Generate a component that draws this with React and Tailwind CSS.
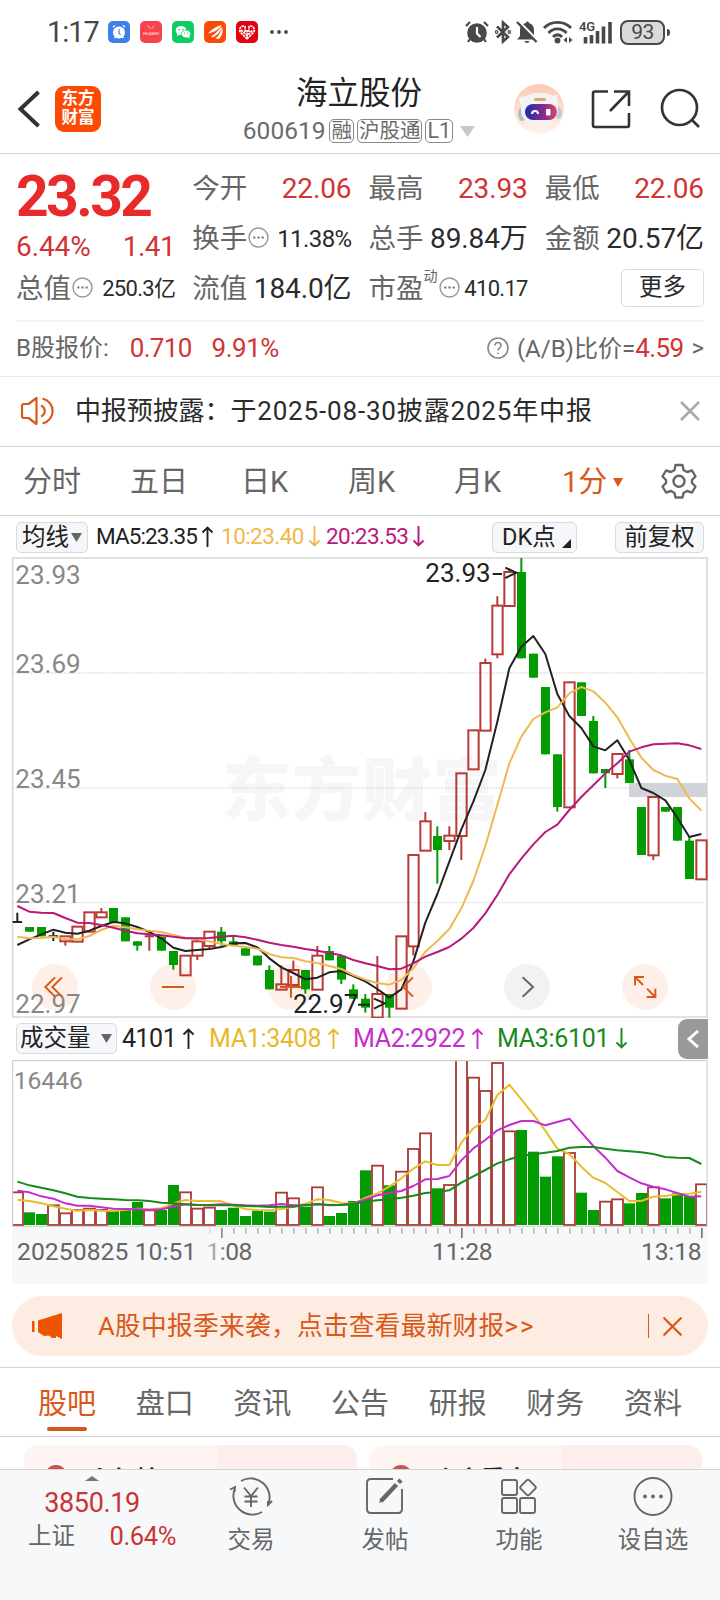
import React from 'react';
import { FiX } from 'react-icons/fi';

// chart geometry is kept in thirds of a pixel
const STEP = 36;
const cx = (i) => 52 + STEP * i;
const toPoints = (values) => values.map((y, i) => `${cx(i)},${y}`).join(' ');

// [type, body top, body bottom, high, low]
const candles = [
  ['k', 1116, 1116, 1088, 1118], ['g', 1131, 1145], ['g', 1131, 1159], ['k', 1159, 1159, 1145, 1173],
  ['r', 1159, 1174, 1159, 1187], ['r', 1130, 1175], ['r', 1087, 1145], ['r', 1087, 1102, 1074, 1102],
  ['g', 1074, 1116], ['g', 1102, 1174], ['g', 1174, 1187, 1174, 1202], ['t', 1159, 1159, 1152, 1202],
  ['g', 1160, 1202], ['g', 1203, 1245, 1203, 1259], ['r', 1217, 1276], ['r', 1174, 1217, 1165, 1230],
  ['r', 1145, 1188, 1145, 1200], ['g', 1145, 1174, 1131, 1187], ['g', 1174, 1185, 1158, 1185], ['g', 1195, 1217],
  ['g', 1217, 1246], ['g', 1260, 1318, 1246, 1318], ['r', 1303, 1319, 1246, 1319], ['r', 1260, 1305, 1232, 1305],
  ['g', 1260, 1318, 1260, 1331], ['r', 1217, 1319, 1188, 1319], ['g', 1203, 1231, 1188, 1231], ['g', 1217, 1289, 1217, 1302],
  ['g', 1318, 1346, 1303, 1346], ['g', 1346, 1373, 1332, 1388], ['r', 1332, 1403, 1218, 1403], ['g', 1332, 1373, 1332, 1403],
  ['r', 1159, 1376], ['r', 915, 1189, 915, 1216], ['r', 814, 902, 786, 902], ['g', 858, 900, 829, 1001],
  ['r', 857, 873, 829, 900], ['r', 670, 858, 670, 930], ['r', 541, 658], ['r', 339, 542, 326, 542],
  ['r', 167, 313, 139, 325], ['r', 66, 168, 56, 168], ['g', 66, 325, 24, 325], ['g', 311, 383],
  ['g', 411, 613], ['g', 613, 771, 613, 785], ['r', 397, 772], ['g', 397, 498],
  ['g', 513, 670, 498, 670], ['g', 657, 670, 657, 714], ['r', 612, 672, 612, 685], ['g', 628, 699, 600, 699],
  ['g', 771, 915], ['r', 741, 916, 741, 930], ['g', 771, 785], ['g', 771, 872],
  ['g', 872, 987, 860, 987], ['r', 871, 988],
];

const ma5 = [1185, 1168, 1153, 1139, 1148, 1151, 1142, 1128, 1116, 1120, 1131, 1146, 1165, 1193, 1203, 1200, 1197, 1191, 1180, 1179, 1192, 1225, 1252, 1269, 1288, 1283, 1267, 1263, 1278, 1294, 1317, 1343, 1318, 1235, 1118, 1032, 935, 838, 755, 660, 515, 355, 290, 258, 312, 432, 498, 534, 589, 601, 571, 630, 714, 729, 751, 803, 861, 852];
const ma10 = [1160, 1165, 1164, 1160, 1167, 1168, 1158, 1140, 1127, 1132, 1138, 1142, 1146, 1155, 1163, 1168, 1174, 1182, 1187, 1191, 1196, 1212, 1222, 1224, 1234, 1239, 1248, 1257, 1275, 1289, 1299, 1304, 1290, 1255, 1205, 1173, 1137, 1075, 993, 888, 765, 640, 560, 507, 487, 472, 430, 411, 424, 458, 502, 565, 623, 660, 677, 687, 745, 782];
const ma20 = [1068, 1085, 1088, 1089, 1104, 1118, 1119, 1125, 1133, 1142, 1150, 1153, 1156, 1160, 1165, 1165, 1164, 1160, 1157, 1162, 1169, 1178, 1185, 1190, 1197, 1202, 1209, 1216, 1230, 1240, 1248, 1258, 1256, 1240, 1220, 1206, 1191, 1166, 1134, 1090, 1035, 973, 926, 883, 846, 824, 780, 741, 706, 670, 640, 605, 592, 583, 581, 580, 586, 597];

const volumes = [517, 577, 582, 556, 580, 570, 566, 570, 572, 570, 546, 571, 570, 495, 517, 566, 563, 570, 563, 588, 572, 575, 518, 535, 560, 502, 588, 579, 543, 451, 437, 496, 455, 387, 340, 505, 495, 60, 173, 213, 129, 334, 330, 395, 470, 409, 399, 518, 570, 545, 538, 550, 519, 502, 535, 520, 528, 493];
const volumeTypes = 'rggrrrrrgggrggrrrgggggrrgrggggrgrrrgrrrrrrggggrggrrggrgggr';
const vol1 = [539, 543, 550, 559, 566, 572, 570, 572, 573, 569, 566, 568, 565, 550, 540, 543, 543, 544, 556, 567, 570, 571, 567, 560, 551, 538, 540, 549, 551, 534, 520, 500, 475, 446, 424, 435, 435, 368, 325, 300, 225, 194, 238, 283, 332, 386, 402, 440, 473, 489, 516, 543, 543, 530, 528, 523, 521, 515];
const vol2 = [512, 517, 529, 536, 550, 557, 557, 562, 566, 567, 568, 570, 568, 560, 553, 555, 555, 553, 554, 556, 557, 556, 552, 556, 556, 553, 556, 555, 551, 538, 526, 519, 513, 498, 478, 477, 468, 421, 385, 360, 331, 315, 303, 303, 316, 306, 296, 337, 378, 413, 453, 472, 490, 500, 508, 519, 530, 529];
const vol3 = [485, 496, 503, 511, 520, 530, 534, 536, 538, 540, 541, 543, 548, 550, 553, 555, 556, 556, 556, 558, 559, 561, 560, 560, 555, 552, 555, 555, 552, 545, 541, 538, 533, 527, 519, 516, 511, 488, 469, 450, 430, 418, 408, 403, 398, 393, 383, 381, 381, 386, 391, 394, 397, 402, 411, 413, 414, 432];

const Candle = ({ data, i }) => {
  const [type, top, bottom, high = top, low = bottom] = data;
  const x = cx(i);
  if (type === 'k' || type === 't') {
    return <path d={`M${x} ${high}V${low}M${x - 14} ${top}H${x + 14}`} stroke={type === 'k' ? '#222' : '#b83a36'} strokeWidth="6" />;
  }
  if (type === 'g') {
    return (
      <g fill="#029c02">
        <rect x={x - 13} y={top} width="27" height={bottom - top} />
        <rect x={x - 3} y={high} width="6" height={low - high} />
      </g>
    );
  }
  return (
    <g stroke="#b83a36" strokeWidth="6" fill="none">
      <rect x={x - 15} y={top} width="31" height={bottom - top} />
      <path d={`M${x} ${high}V${top}M${x} ${bottom}V${low}`} />
    </g>
  );
};

const PriceChart = () => (
  <svg className="block w-full h-[461px]" viewBox="0 21 2160 1383" preserveAspectRatio="none">
    <text x="666" y="796" fontSize="208" fontWeight="900" textLength="838" fill="#f6f6f6">东方财富</text>
    <g stroke="#dedede" strokeWidth="4" strokeDasharray="5 4">
      <path d="M38 369H2121M38 714H2121M38 1058H2121" />
    </g>
    <rect x="38" y="24" width="2083" height="1377" fill="none" stroke="#dcdcdc" strokeWidth="5" />
    {[165, 519, 873, 1227, 1581, 1935].map((x) => (
      <circle key={x} cx={x} cy="1311" r="69" fill={x === 1581 ? '#f2f2f2' : '#fef0e8'} />
    ))}
    <g fontSize="78" fill="#888">
      <text x="46" y="101">23.93</text>
      <text x="46" y="369">23.69</text>
      <text x="46" y="714">23.45</text>
      <text x="46" y="1058">23.21</text>
      <text x="46" y="1390">22.97</text>
    </g>
    <rect x="1887" y="699" width="234" height="42" fill="#d0d4da" />
    {candles.map((c, i) => <Candle key={i} data={c} i={i} />)}
    <g fill="none" strokeWidth="6" strokeLinejoin="round">
      <polyline points={toPoints(ma5)} stroke="#222" />
      <polyline points={toPoints(ma10)} stroke="#efb850" />
      <polyline points={toPoints(ma20)} stroke="#b8197b" />
    </g>
    <g fontSize="78" fill="#222">
      <text x="1276" y="96">23.93</text>
      <text x="879" y="1388">22.97</text>
    </g>
    <path d="M1478 72H1506M1516 53L1549 68L1516 84M1074 1364H1110M1122 1346L1154 1360L1122 1376" fill="none" stroke="#222" strokeWidth="6" />
    {/* zoom and pan controls */}
    <g fill="none" stroke="#d9591a" strokeWidth="6">
      <path d="M165 1282L136 1311L165 1340M186 1282L157 1311L186 1340" />
      <path d="M486 1311H552M840 1311H906M873 1278V1343" />
      <path d="M1239 1282L1210 1311L1239 1340" />
      <path d="M1905 1306V1281H1932M1905 1281L1929 1305M1940 1341H1966V1316M1966 1341L1941 1316" />
      <path d="M1568 1282L1599 1311L1568 1340" stroke="#666" />
    </g>
  </svg>
);

const VolumeChart = () => (
  <svg className="block w-full h-[225px]" viewBox="0 117 2160 675" preserveAspectRatio="none">
    <defs>
      <clipPath id="volume-area"><rect x="38" y="122" width="2083" height="497" /></clipPath>
      <linearGradient id="label-fade" x1="0" x2="1">
        <stop offset="0" stopColor="#f7f8fa" />
        <stop offset="1" stopColor="#f7f8fa" stopOpacity="0" />
      </linearGradient>
    </defs>
    <rect x="36" y="620" width="2087" height="172" fill="#f7f8fa" />
    <text x="41" y="207" fontSize="74" fill="#888">16446</text>
    <g clipPath="url(#volume-area)">
      {volumes.map((y, i) => (
        volumeTypes[i] === 'g'
          ? <rect key={i} x={cx(i) - 16} y={y} width="33" height={615 - y} fill="#029c02" />
          : <rect key={i} x={cx(i) - 16} y={y} width="33" height={615 - y} fill="none" stroke="#ab3c3a" strokeWidth="5.5" />
      ))}
    </g>
    <rect x="38" y="122" width="2083" height="497" fill="none" stroke="#c8c8c8" strokeWidth="3" />
    <g fill="none" strokeWidth="6" strokeLinejoin="round">
      <polyline points={toPoints(vol1)} stroke="#e8bd2c" />
      <polyline points={toPoints(vol2)} stroke="#c42ecb" />
      <polyline points={toPoints(vol3)} stroke="#178a1b" />
    </g>
    {Array.from({ length: 42 }, (_, k) => {
      const major = [1, 21, 41].includes(k);
      return <rect key={k} x={627 + STEP * k} y="624" width="5" height={major ? 30 : 18} fill={major ? '#777' : '#bbb'} />;
    })}
    <g fontSize="74" fill="#666">
      <text x="51" y="719" textLength="538">20250825 10:51</text>
      <text x="619" y="719" textLength="138">1:08</text>
      <text x="1296" y="719" textLength="182">11:28</text>
      <text x="1923" y="719" textLength="182">13:18</text>
    </g>
    <rect x="596" y="622" width="84" height="110" fill="url(#label-fade)" />
  </svg>
);

const StatusBar = () => (
  <div className="h-16 flex items-center pl-12 pr-[50px] text-[#484848]">
    <span className="w-[60px] mt-px -ml-px mr-px text-[29px] tracking-[-1px]">1:17</span>
    <div className="flex gap-2.5">
      <svg width="22" height="22" viewBox="0 0 22 22">
        <rect width="22" height="22" rx="5" fill="#3f7fe6" />
        <circle cx="11" cy="11.5" r="6" fill="#fff" />
        <path d="M5 6L7 4.500M17 6L15 4.500M6.500 17L8 15.500M15.500 17L14 15.500" stroke="#fff" strokeWidth="1.500" />
        <path d="M11 8V12L12.500 14" stroke="#3f7fe6" strokeWidth="1.200" fill="none" />
      </svg>
      <svg width="22" height="22" viewBox="0 0 22 22">
        <rect width="22" height="22" rx="5" fill="#f8434d" />
        <path d="M8 4.500C9 8 13 8 14 4.500" stroke="#fff" strokeWidth="0.800" strokeDasharray="1.500 1" fill="none" />
        <text x="3" y="14" fontSize="4" textLength="16" fill="#fff">HUAWEI</text>
      </svg>
      <svg width="22" height="22" viewBox="0 0 22 22">
        <rect width="22" height="22" rx="5" fill="#0bce63" />
        <ellipse cx="9" cy="9.500" rx="5.300" ry="4.600" fill="#fff" />
        <path d="M5.500 12L5 15L8 13.500Z" fill="#fff" />
        <ellipse cx="14" cy="13" rx="4.600" ry="3.900" fill="#fff" stroke="#0bce63" strokeWidth="0.700" />
        <path d="M15 16L17.500 17.500L17 14.500Z" fill="#fff" />
        <g fill="#0bce63"><circle cx="7.200" cy="8.500" r="0.800" /><circle cx="10.800" cy="8.500" r="0.800" /><circle cx="12.500" cy="12" r="0.600" /><circle cx="15.500" cy="12" r="0.600" /></g>
      </svg>
      <svg width="22" height="22" viewBox="0 0 22 22">
        <rect width="22" height="22" rx="5" fill="#fb4a05" />
        <path d="M4 12.500C8 8 12 5.500 17.500 4C15.500 8 10 11.500 4 12.500ZM7 15.500C11.500 12.500 15 9 17.500 5C17.500 10 13 14.500 8.500 16.500ZM11.500 17.500C15.500 14 17 10 18 6C19.500 11 18 15 15 18Z" fill="#fff" />
      </svg>
      <svg width="22" height="22" viewBox="0 0 22 22">
        <rect width="22" height="22" rx="5" fill="#e0000f" />
        <path d="M11 18L4.500 11.500C2 8 5.500 3.500 9 5.500V11M11 18L17.500 11.500C20 8 16.500 3.500 13 5.500V11M11 18V9M5 9L11 14.500L17 9" fill="none" stroke="#fff" strokeWidth="1.700" strokeDasharray="2.500 0.700" />
      </svg>
    </div>
    <svg className="ml-3" width="18" height="6" viewBox="0 0 18 6" fill="currentColor">
      <circle cx="2" cy="3" r="1.900" /><circle cx="9" cy="3" r="1.900" /><circle cx="16" cy="3" r="1.900" />
    </svg>
    <div className="ml-auto flex items-center">
      <svg width="26" height="24" viewBox="0 0 26 24">
        <circle cx="13" cy="13" r="9.800" fill="currentColor" />
        <path d="M2 6L6 2M24 6L20 2M6 19L4 22M20 19L22 22" stroke="currentColor" strokeWidth="2.200" />
        <path d="M13 7V13.500L16.500 17" stroke="#fff" strokeWidth="2.200" fill="none" />
      </svg>
      <svg className="ml-[5px]" width="16" height="24" viewBox="0 0 16 24" fill="none" stroke="currentColor" strokeWidth="2.600">
        <path d="M2 6.500L13 17L8 21.500V2.500L13 7L2 17.500" />
        <circle cx="1.500" cy="12" r="0.600" /><circle cx="14.300" cy="12" r="0.600" />
      </svg>
      <svg className="ml-[5px]" width="22" height="24" viewBox="0 0 22 24" fill="currentColor">
        <path d="M1 19.500L4 16V10C4 6 7 3.500 10 3C10 1 13 1 13 3C16 4 18 6.500 18 10V16L21 19.500ZM8.500 21H13.500C13 23.500 9 23.500 8.500 21Z" />
        <path d="M2 0.500L22 21" stroke="#fff" strokeWidth="2.500" />
        <path d="M1 2L20.500 22" stroke="currentColor" strokeWidth="2.400" />
      </svg>
      <svg className="ml-1" width="32" height="24" viewBox="0 0 32 24" fill="none" stroke="currentColor" strokeWidth="2.900">
        <path d="M2 8C9 0.500 22 0.500 29 8M6.500 13C11.500 7.500 19.500 7.500 24.500 13M11 17C13.500 14 17.500 14 20 17" />
        <circle cx="15.500" cy="20.500" r="2.900" fill="currentColor" stroke="none" />
        <path d="M25 17V23L21.500 20ZM27 17V23L30.500 20Z" fill="currentColor" stroke="none" />
      </svg>
      <svg className="ml-[5px]" width="34" height="24" viewBox="0 0 34 24">
        <text x="0" y="10.500" fontSize="13" fontWeight="600" textLength="16" fill="currentColor">4G</text>
        <path d="M6.500 17V23.500M12.500 15V23.500M18.500 11V23.500M24.500 6.500V23.500M31 2V23.500" stroke="currentColor" strokeWidth="3.600" strokeLinecap="butt" />
      </svg>
      <div className="ml-[7px] w-[45px] h-[25px] rounded-[8px] border-2 border-[#484848] bg-[#dadada] flex items-center justify-center text-[21px] leading-none tracking-[-0.5px]">93</div>
      <div className="ml-0.5 w-[3px] h-[7px] rounded-r bg-[#484848]" />
    </div>
  </div>
);

const Header = () => (
  <div className="h-[90px] border-b border-[#d4d4d4] flex pl-[17px] pr-[19px]">
    <div className="w-[200px] flex items-center">
      <svg width="24" height="38" viewBox="0 0 24 38" fill="none" stroke="#333" strokeWidth="4"><path d="M21.500 2L3.500 19L21.500 36" /></svg>
      <div className="ml-[14px] w-[46px] h-[46px] rounded-[9px] bg-[#fd4a04] text-white text-[16.500px] leading-[19px] font-bold text-center pt-[3px]">东方<br />财富</div>
    </div>
    <div className="flex-1 flex flex-col items-center">
      <div className="text-[31.500px] leading-[36px] mt-[12px] text-[#222]">海立股份</div>
      <div className="flex items-center gap-[3px] text-[20.500px] text-[#6b6b6b] mt-[6px] h-[26px]">
        <span className="text-[24.500px] mr-px">600619</span>
        <span className="h-6 px-px rounded-[5px] border border-[#888] leading-[22px]">融</span>
        <span className="h-6 px-px rounded-[5px] border border-[#888] leading-[22px]">沪股通</span>
        <span className="h-6 px-px rounded-[5px] border border-[#888] leading-[22px] text-[21.500px]">L1</span>
        <svg className="ml-1" width="15" height="11"><path d="M0 0H15L7.500 11Z" fill="#c8c8c8" /></svg>
      </div>
    </div>
    <div className="w-[200px] flex items-center justify-end">
      <svg width="50" height="50" viewBox="0 0 50 50">
        <defs>
          <linearGradient id="robot-bg" x2="0" y2="1"><stop stopColor="#fdc9b0" /><stop offset="1" stopColor="#fff3ee" /></linearGradient>
          <linearGradient id="robot-face" x2="1"><stop stopColor="#1d2fa6" /><stop offset=".6" stopColor="#8a2a90" /><stop offset="1" stopColor="#d34a72" /></linearGradient>
        </defs>
        <circle cx="25" cy="25" r="25" fill="url(#robot-bg)" />
        <ellipse cx="8" cy="30" rx="4" ry="7" fill="#b9bac6" /><ellipse cx="44" cy="29" rx="4" ry="6" fill="#c9c9d2" />
        <path d="M5 13L13 12L10 23L6 20ZM36 12L43 11L44 20L40 22Z" fill="#f7f3f4" />
        <rect x="7" y="9" width="37" height="32" rx="15" fill="#f4f2f5" />
        <rect x="20" y="14" width="12" height="3" rx="1.500" fill="#d9a878" />
        <rect x="11" y="20" width="32" height="16" rx="8" fill="url(#robot-face)" />
        <path d="M18 30C18 26 24 26 24 30" stroke="#fff" strokeWidth="2" fill="none" />
        <rect x="32" y="25" width="4.500" height="6.500" rx="1" fill="#fff" />
      </svg>
      <svg className="ml-[27px]" width="40" height="40" viewBox="0 0 40 40" fill="none" stroke="#333" strokeWidth="2.600">
        <path d="M17 2.500H4Q2 2.500 2 4.500V36Q2 38 4 38H36Q38 38 38 36V24M23 2.500H38V17M37 3.500L19 22" />
      </svg>
      <svg className="ml-[29px]" width="41" height="41" viewBox="0 0 41 41" fill="none" stroke="#333" strokeWidth="2.700">
        <circle cx="19.500" cy="19.500" r="17.500" /><path d="M31.500 31.500L39 39" />
      </svg>
    </div>
  </div>
);

const Dots = () => (
  <svg className="self-center shrink-0 ml-px -mt-0.5" width="21" height="21" viewBox="0 0 20 20">
    <circle cx="10" cy="10" r="9" fill="none" stroke="#999" strokeWidth="1.400" />
    <g fill="#888"><circle cx="6" cy="10" r="1.200" /><circle cx="10" cy="10" r="1.200" /><circle cx="14" cy="10" r="1.200" /></g>
  </svg>
);

const Stat = ({ label, value, red, dots, sup, small, smaller }) => {
  let size = 'text-[28px] tracking-[-0.100px]';
  if (small) size = 'text-[24px] tracking-[-0.600px]';
  if (smaller) size = 'text-[22px] tracking-[-0.700px]';
  return (
    <div className="h-[50px] pt-px flex items-center whitespace-nowrap">
      <span className="text-[27.500px] text-[#666]">{label}</span>
      {sup && <span className="text-[14px] text-[#666] mb-6">{sup}</span>}
      {dots && <Dots />}
      <span className={`ml-auto ${size} ${red ? 'text-[#d03434]' : 'text-[#2b2b2b]'}`}>{value}</span>
    </div>
  );
};

const Quote = () => (
  <div className="h-[168px] mx-4 pt-[9px] border-b-2 border-[#f3f3f3] grid grid-cols-4 grid-rows-[50px_50px_50px] gap-x-[17px]">
    <div className="row-span-2 whitespace-nowrap pt-px">
      <div className="h-[65px] flex items-center text-[57px] font-bold tracking-[-2.600px] text-[#e82a2a]">23.32</div>
      <div className="h-[35px] flex items-center justify-between text-[28px] tracking-[-0.100px] text-[#d03434]">
        <span>6.44%</span><span className="tracking-[-0.500px]">1.41</span>
      </div>
    </div>
    <Stat label="今开" value="22.06" red />
    <Stat label="最高" value="23.93" red />
    <Stat label="最低" value="22.06" red />
    <Stat label="换手" value="11.38%" dots small />
    <Stat label="总手" value="89.84万" />
    <Stat label="金额" value="20.57亿" />
    <Stat label="总值" value="250.3亿" dots smaller />
    <Stat label="流值" value="184.0亿" />
    <Stat label="市盈" sup="动" value="410.17" dots smaller />
    <div className="flex items-center justify-end">
      <button className="w-[83px] h-[38px] rounded-[5px] border border-[#ddd] text-[23.500px] leading-none text-[#2b2b2b]">更多</button>
    </div>
  </div>
);

const BShare = () => (
  <div className="h-[55px] px-4 pb-[2px] border-b border-[#ececec] flex items-center text-[24px] text-[#666] whitespace-nowrap">
    <span>B股报价:</span>
    <span className="ml-[21px] text-[26px] tracking-[-0.700px] text-[#d03434]">0.710</span>
    <span className="ml-5 text-[26px] tracking-[-0.500px] text-[#d03434]">9.91%</span>
    <svg className="ml-auto mr-2" width="22" height="22" viewBox="0 0 22 22" fill="none" stroke="#888" strokeWidth="1.600">
      <circle cx="11" cy="11" r="10" /><path d="M8 8.500C8 4.500 14 4.500 14 8.500C14 11 11 11 11 13.500M11 15.500V17" />
    </svg>
    <span>(A/B)比价=<span className="text-[26px] tracking-[-0.600px] text-[#d03434]">4.59</span></span>
    <span className="ml-2">&gt;</span>
  </div>
);

const Notice = () => (
  <div className="h-[70px] px-[20px] border-b border-[#d4d4d4] flex items-center pb-px text-[26px] text-[#2b2b2b] whitespace-nowrap">
    <svg width="36" height="30" viewBox="0 0 36 30" fill="none" stroke="#d9591a" strokeWidth="2.200">
      <path d="M16.500 2V28L8.500 22H4Q2 22 2 20V10Q2 8 4 8H8.500Z" strokeLinejoin="round" />
      <path d="M21 9.500C26 12 26 18 21 20.500M22.500 2.500C36 6 36 24 22.500 27.500" />
    </svg>
    <span className="ml-[19px] tracking-[-0.1px]">中报预披露：</span>
    <span className="tracking-[0.830px]">于2025-08-30披露2025年中报</span>
    <svg className="ml-auto" width="20" height="20"><path d="M1 1L19 19M19 1L1 19" stroke="#aaa" strokeWidth="2.600" /></svg>
  </div>
);

const PeriodTabs = () => (
  <div className="h-[69px] border-b border-[#d4d4d4] pl-[23px] pr-[23px] pt-[3px] flex items-center text-[29px] text-[#666] whitespace-nowrap">
    <span className="w-[107px]">分时</span>
    <span className="w-[111px]">五日</span>
    <span className="w-[107px]">日K</span>
    <span className="w-[106px]">周K</span>
    <span className="w-[108px]">月K</span>
    <span className="text-[#d9591a] flex items-center gap-1.5">
      <span>1分</span>
      <svg width="10" height="9"><path d="M0 0H10L5 9Z" fill="#d9591a" /></svg>
    </span>
    <svg className="ml-auto -mt-[3px]" width="36" height="36" viewBox="0 0 36 36" fill="none" stroke="#666" strokeWidth="2.400" strokeLinejoin="round">
      <path d="M14.500 2H21.500L22.500 7L26 9L31 7.500L34.500 13.500L31 17V20L34.500 23.500L31 29.500L26 28L22.500 30L21.500 34.500H14.500L13.500 30L10 28L5 29.500L1.500 23.500L5 20V17L1.500 13.500L5 7.500L10 9L13.500 7Z" />
      <circle cx="18" cy="18.300" r="5.500" />
    </svg>
  </div>
);

const chip = 'h-[31px] rounded-[5px] border border-[#d8dade] bg-[#f6f7fa] text-[#222] text-[23.500px] leading-none flex items-center';

const Arrow = ({ down }) => (
  <svg className={down ? 'ml-1 -mt-0.5 rotate-180' : 'ml-1 -mt-0.5'} width="13" height="21" viewBox="0 0 13 21" fill="none" stroke="currentColor" strokeWidth="1.900">
    <path d="M6.500 21V1.500M1.500 6.500L6.500 1.500L11.500 6.500" />
  </svg>
);

const MaRow = () => (
  <div className="h-[41px] pl-4 pr-4 pt-[6px] flex items-start whitespace-nowrap">
    <div className={`${chip} w-[72px] pl-[5px] gap-0.5`}>均线<svg width="11" height="9"><path d="M0 0H11L5.500 9Z" fill="#666" /></svg></div>
    <div className="ml-2 h-[30px] flex items-center text-[22.500px] tracking-[-0.900px] text-[#222]">MA5:23.35<Arrow /></div>
    <div className="ml-[7px] h-[30px] flex items-center text-[22.500px] tracking-[-0.550px] text-[#efb850]">10:23.40<Arrow down /></div>
    <div className="ml-[5px] h-[30px] flex items-center text-[22.500px] tracking-[-0.600px] text-[#b8197b]">20:23.53<Arrow down /></div>
    <div className={`${chip} ml-auto w-[85px] pl-[9px]`}>DK点<svg className="self-end mb-1 ml-1.5 shrink-0" width="9" height="9"><path d="M9 0V9H0Z" fill="#222" /></svg></div>
    <div className={`${chip} ml-[38px] w-[89px] justify-center`}>前复权</div>
  </div>
);

const VolumeRow = () => (
  <div className="h-[41px] pl-4 pr-3 pt-[5px] flex items-start whitespace-nowrap">
    <div className={`${chip} w-[101px] pl-[3px] gap-2.5`}>成交量<svg width="11" height="9"><path d="M0 0H11L5.500 9Z" fill="#666" /></svg></div>
    <div className="ml-[5px] w-[87px] h-[32px] flex items-center gap-0.5 text-[25px] text-[#222] tracking-[-0.500px]">4101<Arrow /></div>
    <div className="w-[144px] h-[32px] flex items-center gap-0.5 text-[25px] text-[#e8b82c] tracking-[-0.300px]">MA1:3408<Arrow /></div>
    <div className="w-[144px] h-[32px] flex items-center gap-0.5 text-[25px] text-[#c42ecb] tracking-[-0.300px]">MA2:2922<Arrow /></div>
    <div className="h-[32px] flex items-center gap-0.5 text-[25px] text-[#178a1b] tracking-[-0.300px]">MA3:6101<Arrow down /></div>
    <div className="ml-auto -mt-[4px] w-[30px] h-[40px] rounded-l-[9px] bg-[#999] flex items-center justify-center">
      <svg width="12" height="18" fill="none" stroke="#fff" strokeWidth="3"><path d="M11 1L2 9L11 17" /></svg>
    </div>
  </div>
);

const Promo = () => (
  <div className="mx-3 mt-3 h-[60px] rounded-full bg-[#fdece2] flex items-center pl-5 pr-[23px] text-[25.700px] text-[#d9591a] whitespace-nowrap">
    <svg width="32" height="28" viewBox="0 0 32 28" fill="#ec5400">
      <path d="M0 9H2.500V20H0ZM6 8.500L30 1V27L24 24V26H20L17 23.500L12 24L6 20Z" />
    </svg>
    <span className="ml-[34px] tracking-[0.300px]">A股中报季来袭，</span>
    <span className="tracking-[0.250px]">点击查看最新财报<span className="tracking-[2px]">&gt;&gt;</span></span>
    <span className="ml-auto w-px h-6 bg-[#d9591a]" />
    <FiX className="ml-[7px] -mr-1" size={33} strokeWidth={1.7} />
  </div>
);

const sections = ['股吧', '盘口', '资讯', '公告', '研报', '财务', '资料'];

const SectionTabs = () => (
  <div className="mt-[11px] h-[70px] border-y border-[#d4d4d4] flex justify-between pl-[38px] pr-[38px] text-[29px] text-[#666]">
    {sections.map((name, i) => (
      <div key={name} className={`flex flex-col items-center ${i === 0 ? 'text-[#d9591a]' : ''}`}>
        <span className="leading-[42px] mt-[15px]">{name}</span>
        {i === 0 && <span className="mt-[2px] w-10 h-1 rounded-full bg-[#cd5a22]" />}
      </div>
    ))}
  </div>
);

const HotCard = ({ title }) => (
  <div className="flex-1 h-20 rounded-[14px] bg-gradient-to-r from-[#fff5f2] from-58% to-[#feeeeb] to-58% pl-[21px] pt-5 flex items-start">
    <span className="w-[22px] h-[22px] rounded-full bg-[#c75450]" />
    <span className="ml-[21px] mt-[3px] text-[24px] leading-6 font-bold text-[#222]">{title}</span>
  </div>
);

const NavItem = ({ label, children }) => (
  <div className="flex-1 flex flex-col items-center pt-[6px] text-[#666]">
    <svg width="44" height="42" viewBox="0 0 44 42" fill="none" stroke="currentColor" strokeWidth="1.900">{children}</svg>
    <span className="mt-[5px] text-[23.500px] leading-[34px]">{label}</span>
  </div>
);

const BottomBar = () => (
  <div className="h-[131px] border-t border-[#d4d4d4] bg-[#f7f8fa] flex">
    <div className="w-[184px] flex flex-col items-center text-[#c93434]">
      <svg className="mt-[6px]" width="14" height="5"><path d="M0 5L7 0L14 5Z" fill="#777" /></svg>
      <div className="mt-[6px] text-[27px] leading-8 tracking-[-0.400px]">3850.19</div>
      <div className="mt-px w-full pl-[28px] pr-2 flex items-center justify-between leading-8">
        <span className="text-[23.500px] text-[#666]">上证</span>
        <span className="text-[25.500px] tracking-[-0.400px]">0.64%</span>
      </div>
    </div>
    <div className="flex-1 flex">
      <NavItem label="交易">
        <path d="M12 5A19 19 0 0 1 39 29M43 25L39 29V25M33 36A19 19 0 0 1 6 12M1 13.500L6 11L5.500 16M15 11.500L22 20L29 11.500M22 20V31M15.500 20.500H28.500M15.500 25.500H28.500" />
      </NavItem>
      <NavItem label="发帖">
        <path d="M30 3H8Q4 3 4 7V33Q4 37 8 37H35Q39 37 39 33V13" />
        <path d="M18 25L33.500 8.500" strokeWidth="4.500" /><path d="M35.500 6.500L38 4" strokeWidth="4.500" /><path d="M16 27L20 25.500L17.500 23Z" fill="currentColor" stroke="none" />
      </NavItem>
      <NavItem label="功能">
        <rect x="5" y="4" width="15" height="15" rx="2" /><rect x="5" y="22" width="15" height="15" rx="2" /><rect x="23" y="22" width="15" height="15" rx="2" />
        <rect x="25" y="5.500" width="12" height="12" rx="2" transform="rotate(45 31 11.500)" />
      </NavItem>
      <NavItem label="设自选">
        <circle cx="22" cy="20.500" r="18.500" />
        <g fill="currentColor" stroke="none"><circle cx="14" cy="20.500" r="1.900" /><circle cx="22" cy="20.500" r="1.900" /><circle cx="30" cy="20.500" r="1.900" /></g>
      </NavItem>
    </div>
  </div>
);

const App = () => {
  return (
    <div className="w-[720px] h-[1600px] overflow-hidden bg-white font-[Roboto,'Noto_Sans_CJK_SC',sans-serif] flex flex-col [&>*]:shrink-0">
      <StatusBar />
      <Header />
      <Quote />
      <BShare />
      <Notice />
      <PeriodTabs />
      <MaRow />
      <PriceChart />
      <VolumeRow />
      <VolumeChart />
      <Promo />
      <SectionTabs />
      <div className="h-8 overflow-hidden flex gap-3 pl-6 pr-[18px] pt-2">
        <HotCard title="人气榜" />
        <HotCard title="个户看点" />
      </div>
      <BottomBar />
    </div>
  );
};

export default App;
